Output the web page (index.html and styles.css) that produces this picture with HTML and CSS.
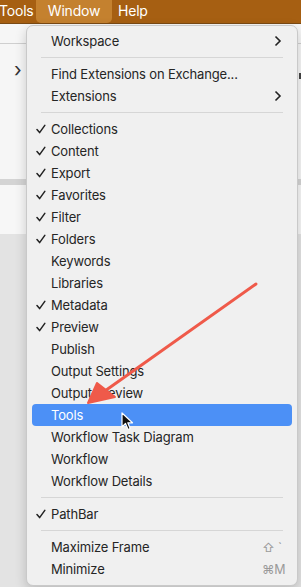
FILE: index.html
```html
<!DOCTYPE html>
<html>
<head>
<meta charset="utf-8">
<link rel="stylesheet" href="styles.css">
</head>
<body>
<div class="screen">
  <div class="menubar">
    <span class="mb-item mb-tools">Tools</span>
    <span class="mb-item mb-active">Window</span>
    <span class="mb-item mb-help">Help</span>
  </div>
  <div class="app">
    <div class="app-top">
      <div class="app-row"></div>
      <div class="app-row2"><span class="app-chev">›</span><span class="app-mark"></span></div>
      <div class="app-bar"></div>
      <div class="app-row3"></div>
    </div>
    <div class="app-bottom"></div>
  </div>

  <div class="menu">
    <div class="item"><span class="check"></span><span class="label">Workspace</span><span class="sub"><svg width="8" height="12" viewBox="0 0 8 12"><path d="M1.5 1.5 L6 6 L1.5 10.5" fill="none" stroke="#222" stroke-width="1.6"/></svg></span></div>
    <div class="sep"></div>
    <div class="item"><span class="check"></span><span class="label">Find Extensions on Exchange...</span></div>
    <div class="item"><span class="check"></span><span class="label">Extensions</span><span class="sub"><svg width="8" height="12" viewBox="0 0 8 12"><path d="M1.5 1.5 L6 6 L1.5 10.5" fill="none" stroke="#222" stroke-width="1.6"/></svg></span></div>
    <div class="sep"></div>
    <div class="item"><span class="check"><svg width="10" height="10" viewBox="0 0 10 10"><path d="M1 5.6 L3.6 8.6 L8.8 1.4" fill="none" stroke="#222" stroke-width="1.5" stroke-linecap="round" stroke-linejoin="round"/></svg></span><span class="label">Collections</span></div>
    <div class="item"><span class="check"><svg width="10" height="10" viewBox="0 0 10 10"><path d="M1 5.6 L3.6 8.6 L8.8 1.4" fill="none" stroke="#222" stroke-width="1.5" stroke-linecap="round" stroke-linejoin="round"/></svg></span><span class="label">Content</span></div>
    <div class="item"><span class="check"><svg width="10" height="10" viewBox="0 0 10 10"><path d="M1 5.6 L3.6 8.6 L8.8 1.4" fill="none" stroke="#222" stroke-width="1.5" stroke-linecap="round" stroke-linejoin="round"/></svg></span><span class="label">Export</span></div>
    <div class="item"><span class="check"><svg width="10" height="10" viewBox="0 0 10 10"><path d="M1 5.6 L3.6 8.6 L8.8 1.4" fill="none" stroke="#222" stroke-width="1.5" stroke-linecap="round" stroke-linejoin="round"/></svg></span><span class="label">Favorites</span></div>
    <div class="item"><span class="check"><svg width="10" height="10" viewBox="0 0 10 10"><path d="M1 5.6 L3.6 8.6 L8.8 1.4" fill="none" stroke="#222" stroke-width="1.5" stroke-linecap="round" stroke-linejoin="round"/></svg></span><span class="label">Filter</span></div>
    <div class="item"><span class="check"><svg width="10" height="10" viewBox="0 0 10 10"><path d="M1 5.6 L3.6 8.6 L8.8 1.4" fill="none" stroke="#222" stroke-width="1.5" stroke-linecap="round" stroke-linejoin="round"/></svg></span><span class="label">Folders</span></div>
    <div class="item"><span class="check"></span><span class="label">Keywords</span></div>
    <div class="item"><span class="check"></span><span class="label">Libraries</span></div>
    <div class="item"><span class="check"><svg width="10" height="10" viewBox="0 0 10 10"><path d="M1 5.6 L3.6 8.6 L8.8 1.4" fill="none" stroke="#222" stroke-width="1.5" stroke-linecap="round" stroke-linejoin="round"/></svg></span><span class="label">Metadata</span></div>
    <div class="item"><span class="check"><svg width="10" height="10" viewBox="0 0 10 10"><path d="M1 5.6 L3.6 8.6 L8.8 1.4" fill="none" stroke="#222" stroke-width="1.5" stroke-linecap="round" stroke-linejoin="round"/></svg></span><span class="label">Preview</span></div>
    <div class="item"><span class="check"></span><span class="label">Publish</span></div>
    <div class="item"><span class="check"></span><span class="label">Output Settings</span></div>
    <div class="item"><span class="check"></span><span class="label">Output Preview</span></div>
    <div class="item selected"><span class="check"></span><span class="label">Tools</span></div>
    <div class="item"><span class="check"></span><span class="label">Workflow Task Diagram</span></div>
    <div class="item"><span class="check"></span><span class="label">Workflow</span></div>
    <div class="item"><span class="check"></span><span class="label">Workflow Details</span></div>
    <div class="sep"></div>
    <div class="item"><span class="check"><svg width="10" height="10" viewBox="0 0 10 10"><path d="M1 5.6 L3.6 8.6 L8.8 1.4" fill="none" stroke="#222" stroke-width="1.5" stroke-linecap="round" stroke-linejoin="round"/></svg></span><span class="label">PathBar</span></div>
    <div class="sep"></div>
    <div class="item"><span class="check"></span><span class="label">Maximize Frame</span><span class="key">⇧ `</span></div>
    <div class="item"><span class="check"></span><span class="label">Minimize</span><span class="key">⌘M</span></div>
  </div>

  <svg class="arrow" width="301" height="587" viewBox="0 0 301 587">
    <line x1="256" y1="284" x2="95" y2="398" stroke="#ef5a4a" stroke-width="3" stroke-linecap="round"/>
    <path d="M88 403 L97 383 L115 397 Z" fill="#ef5a4a" stroke="#ef5a4a" stroke-width="2" stroke-linejoin="round"/>
  </svg>

  <svg class="cursor" width="14" height="20" viewBox="0 0 14 20">
    <path d="M1 1 L1 15 L4.5 11.5 L7 17.5 L9.2 16.6 L6.8 10.8 L11.5 10.8 Z" fill="#111" stroke="#fff" stroke-width="1.2" stroke-linejoin="round"/>
  </svg>
</div>
</body>
</html>
```
FILE: styles.css
```css
html, body {
  margin: 0;
  padding: 0;
  width: 301px;
  height: 587px;
  overflow: hidden;
  font-family: Inter, "Helvetica Neue", "Liberation Sans", sans-serif;
}
.screen {
  position: relative;
  width: 301px;
  height: 587px;
  display: flex;
  flex-direction: column;
}
.menubar {
  height: 23px;
  background: #a65f12;
  border-bottom: 1px solid #7a4a14;
  display: flex;
  align-items: center;
  color: #fff;
  font-size: 14px;
  flex: none;
}
.mb-item {
  height: 23px;
  line-height: 22px;
  box-sizing: border-box;
}
.mb-tools { width: 37px; margin-left: -1px; padding-left: 0; letter-spacing: -0.2px; }
.mb-active {
  background: #c4812f;
  border-radius: 0 0 5px 5px;
  width: 76px;
  text-align: center;
  letter-spacing: -0.2px;
}
.mb-help { margin-left: 6px; letter-spacing: -0.2px; }
.app {
  flex: 1;
  display: flex;
  flex-direction: column;
}
.app-top {
  background: #f6f6f6;
  height: 210px;
  display: flex;
  flex-direction: column;
}
.app-row { height: 19px; border-bottom: 1px solid #cfcfcf; }
.app-row2 { height: 135px; position: relative; display: flex; justify-content: space-between; }
.app-chev {
  display: block;
  margin: 16px 0 0 14px;
  font-size: 20px;
  line-height: 20px;
  color: #333;
}
.app-mark {
  width: 2px;
  height: 6px;
  margin-top: 29px;
  background: #444;
}
.app-bar { height: 6px; background: #d4d4d4; }
.app-row3 { flex: 1; background: #f7f7f7; }
.app-bottom { flex: 1; background: #e3e3e3; }

.menu {
  position: absolute;
  left: 26px;
  top: 25px;
  width: 272px;
  box-sizing: border-box;
  background: #f0f0f0;
  border: 1px solid #c9c9c9;
  border-radius: 7px;
  box-shadow: 0 4px 12px rgba(0,0,0,0.18);
  padding: 4px 5px 5px;
  display: flex;
  flex-direction: column;
  font-size: 13px;
  letter-spacing: -0.15px;
  color: #252525;
}
.item {
  height: 22px;
  display: flex;
  align-items: center;
  border-radius: 4px;
  flex: none;
}
.check {
  width: 19px;
  padding-left: 4px;
  box-sizing: border-box;
  display: flex;
  align-items: center;
  flex: none;
}
.label { flex: 1; white-space: nowrap; }
.sub { width: 18px; display: flex; align-items: center; }
.key { width: 30px; color: #9a9a9a; font-size: 12.5px; }
.sep {
  height: 1px;
  background: #d6d6d6;
  margin: 5px 9px;
  flex: none;
}
.selected {
  background: #4c90f6;
  color: #fff;
}
.arrow {
  position: absolute;
  left: 0;
  top: 0;
  pointer-events: none;
}
.cursor {
  position: absolute;
  left: 121px;
  top: 412px;
}
```
